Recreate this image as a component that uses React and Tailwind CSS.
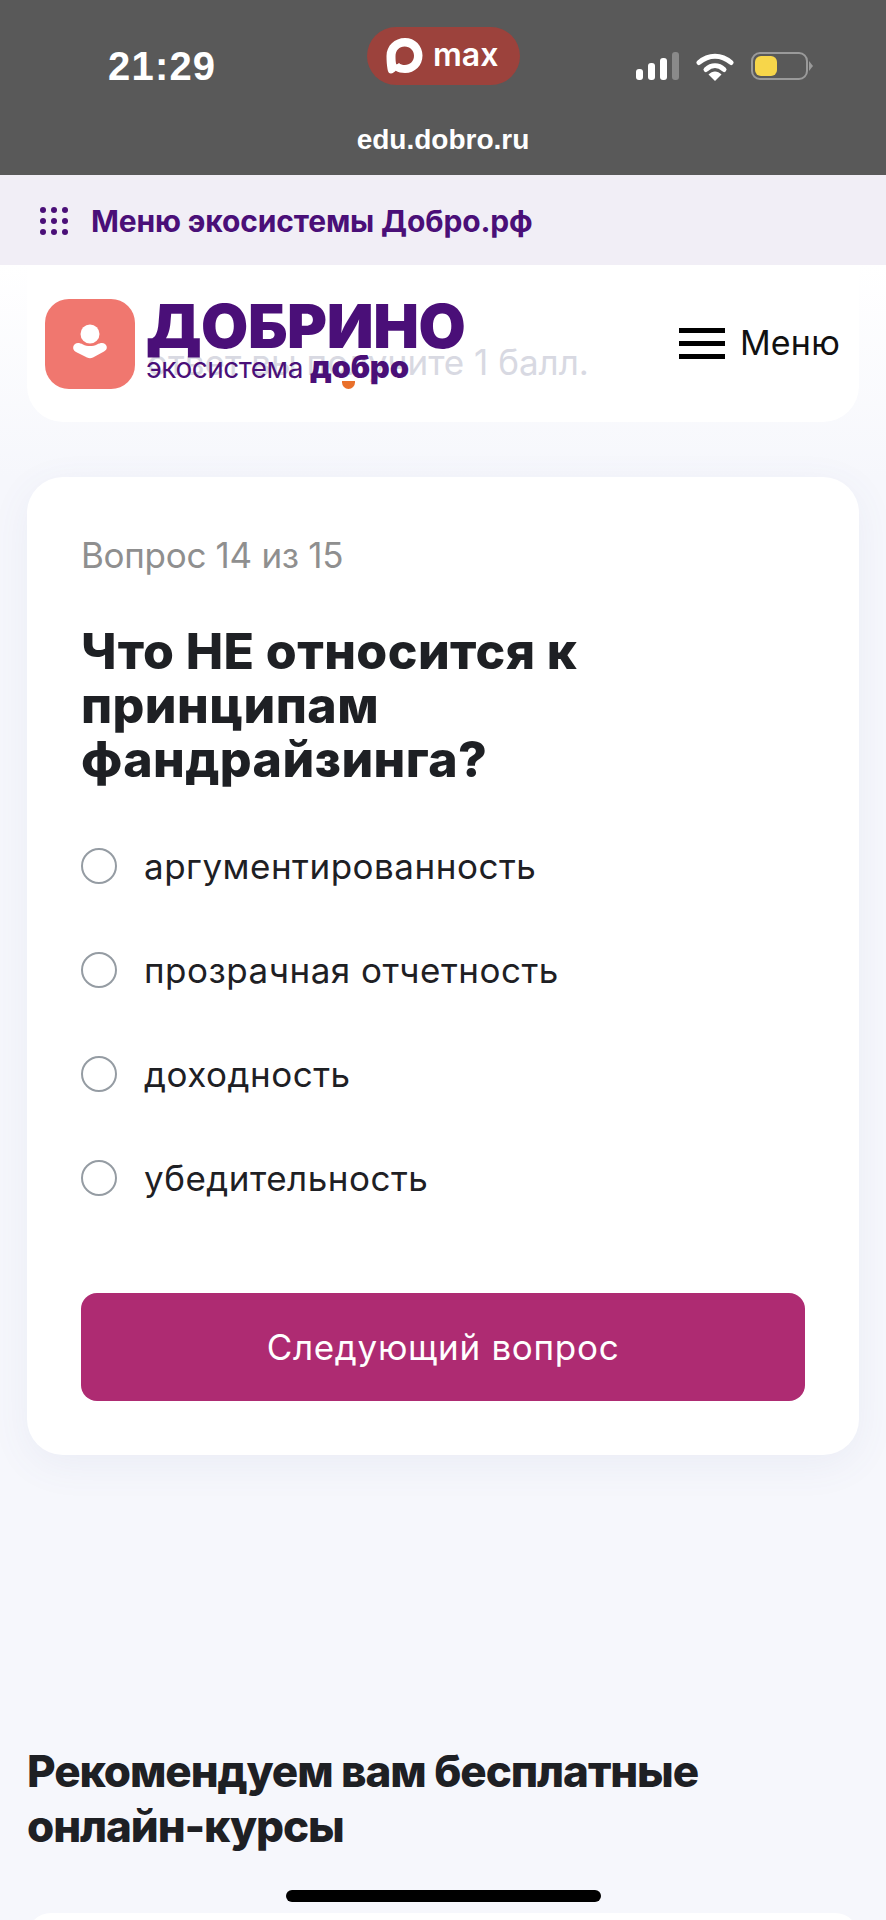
import React from 'react';

const options = ['аргументированность', 'прозрачная отчетность', 'доходность', 'убедительность'];

const StatusBar = () => (
  <div className="h-[175px] bg-[#595959] shrink-0 flex flex-col text-white font-['Liberation_Sans',sans-serif]">
    <div className="relative h-[125px]">
      <div className="absolute left-[108px] top-[43px] text-[40px] leading-[46px] font-bold tracking-[1.2px]">21:29</div>
      <div className="absolute left-[367px] top-[27px] w-[153px] h-[58px] rounded-full bg-[#9c423c] flex items-center pl-[18px] gap-[10px]">
        <svg width="38" height="38" viewBox="0 0 38 38" fill="none">
          <path fillRule="evenodd" clipRule="evenodd" fill="#fff" d="M20 1C9.5 1 1.5 8.8 1.5 19c0 5 .4 9 1 13 .4 3 1.6 4.6 3.4 4.6 2 0 3.4-1.6 4.8-2.8 2.6 1.4 5.6 2.2 9.3 2.2 10 0 17.5-7.6 17.5-17.5C37.500 8.800 30 1 20 1Zm-.3 8.500c5.300 0 9.300 4 9.300 9.200 0 5.300-4 9.300-9.200 9.300-2.300 0-4.300-.8-5.800-2.100-1 .9-2.200 1.600-2.800 1.400-.5-2-.7-5-.7-8 0-6 3.800-9.800 9.200-9.800Z" />
        </svg>
        <span className="text-[32px] leading-[38px] font-semibold font-['Inter',sans-serif] -mt-[3px]">max</span>
      </div>
      <div className="absolute left-[636px] top-[52px] flex items-end gap-[5px] h-[28px]">
        <span className="w-[7px] h-[11px] rounded-[3px] bg-white" />
        <span className="w-[7px] h-[17px] rounded-[3px] bg-white" />
        <span className="w-[7px] h-[22px] rounded-[3px] bg-white" />
        <span className="w-[7px] h-[28px] rounded-[3px] bg-[#8a8a8a]" />
      </div>
      <svg className="absolute left-[696px] top-[52px]" width="38" height="29" viewBox="0 0 38 29" fill="none">
        <path d="M3 10.500C12.500 2 25.500 2 35 10.500" stroke="#fff" strokeWidth="5" strokeLinecap="round" />
        <path d="M10 17.500C15.500 12.500 22.500 12.500 28 17.500" stroke="#fff" strokeWidth="5" strokeLinecap="round" />
        <path d="M12.500 22.500C16.500 18.500 21.500 18.500 25.500 22.500L19 29Z" fill="#fff" />
      </svg>
      <div className="absolute left-[751px] top-[52px] w-[57px] h-[28px] rounded-[9px] border-[2px] border-[#9a9a9a] p-[2px]">
        <div className="w-[22px] h-full rounded-[6px] bg-[#f7d64a]" />
      </div>
      <div className="absolute left-[809px] top-[61px] w-0 h-0 border-y-[5px] border-y-transparent border-l-[4px] border-l-[#9a9a9a]" />
    </div>
    <div className="text-center text-[28px] leading-[30px] font-bold">edu.dobro.ru</div>
  </div>
);

const EcoBar = () => (
  <div className="h-[90px] pt-[2px] bg-[#f1eef6] flex items-center pl-[40px] gap-[23px] shrink-0">
    <div className="grid grid-cols-3 gap-x-[5px] gap-y-[5px]">
      {[...Array(9).keys()].map((i) => (
        <span key={i} className="w-[6px] h-[6px] rounded-full bg-[#4a0f78]" />
      ))}
    </div>
    <span className="text-[30px] leading-[36px] font-bold text-[#4a0f78] font-['Inter',sans-serif] tracking-[-0.15px]">Меню экосистемы Добро.рф</span>
  </div>
);

const Logo = () => (
  <div className="flex items-start gap-[11px]">
    <div className="w-[90px] h-[90px] rounded-[24px] bg-[#f0776f] flex items-center justify-center">
      <svg width="40" height="40" viewBox="0 0 40 40" fill="#fff">
        <circle cx="20" cy="10" r="9.500" />
        <path d="M5 20c2-1.500 5-1 8 .500 4 2 10 2 14 0 3-1.500 6-2 8-.5 3 2.500 2 6-1 7.500l-11 6c-2 1-4 1-6 0L6 28C3 26.500 2 22.500 5 20Z" />
      </svg>
    </div>
    <div className="font-['Inter',sans-serif] text-[#4a0f78] -mt-[1px]">
      <div className="text-[61px] leading-[56px] font-black tracking-[-0.4px]">ДОБРИНО</div>
      <div className="flex items-baseline text-[28px] leading-[30px] tracking-[-0.5px] gap-[7px] -mt-[2px]">
        <span>экосистема</span>
        <span className="relative text-[31px] font-black tracking-[-0.2px]">
          добро
          <span className="absolute left-[32px] top-[29px] w-[13px] h-[8px] rounded-b-full bg-[#e9702b]" />
        </span>
      </div>
    </div>
  </div>
);

const Header = () => (
  <div className="pb-[55px] bg-gradient-to-b from-white to-[#f6f7fc] shrink-0">
    <div className="relative mx-[27px] h-[157px] bg-white rounded-b-[36px]">
      <div className="absolute left-[120px] top-[77px] text-[35px] leading-[40px] text-[#d8d9e2] font-['Inter',sans-serif] whitespace-nowrap">ответ вы получите 1 балл.</div>
      <div className="relative flex items-center justify-between pl-[18px] pr-[19px] pt-[34px]">
        <Logo />
        <div className="flex items-center gap-[15px] -mt-[2px]">
          <div className="flex flex-col gap-[8px]">
            <span className="w-[46px] h-[5px] bg-black" />
            <span className="w-[46px] h-[5px] bg-black" />
            <span className="w-[46px] h-[5px] bg-black" />
          </div>
          <span className="text-[34px] leading-[40px] text-[#111] font-['Inter',sans-serif] tracking-[0.2px]">Меню</span>
        </div>
      </div>
    </div>
  </div>
);

const Question = () => (
  <div className="mx-[27px] px-[54px] pt-[58px] pb-[54px] bg-white rounded-[36px] shrink-0 shadow-[0_10px_40px_rgba(90,100,160,0.07)] font-['Inter',sans-serif]">
    <div className="text-[35px] leading-[40px] text-[#8f8f8f] tracking-[-0.3px]">Вопрос 14 из 15</div>
    <h1 className="mt-[49px] text-[50px] leading-[54px] font-extrabold text-[#1e2024] tracking-[0.4px]">
      Что НЕ относится к<br />принципам<br />фандрайзинга?
    </h1>
    <div className="mt-[60px] flex flex-col gap-[64px]">
      {options.map((o) => (
        <div key={o} className="flex items-center gap-[27px] h-[40px]">
          <span className="w-[36px] h-[36px] rounded-full border-[2px] border-[#959ca3] shrink-0" />
          <span className="text-[35px] leading-[40px] text-[#1e2024] tracking-[0.5px]">{o}</span>
        </div>
      ))}
    </div>
    <button className="mt-[95px] w-full h-[108px] rounded-[16px] bg-[#ae2b72] text-white text-[35px] tracking-[0.7px]">Следующий вопрос</button>
  </div>
);

const App = () => (
  <div className="relative w-[886px] h-[1920px] overflow-hidden bg-[#f6f7fc] flex flex-col">
    <StatusBar />
    <EcoBar />
    <Header />
    <Question />
    <h2 className="mt-[289px] ml-[27px] w-[760px] text-[44px] leading-[55px] font-extrabold text-[#1e2024] font-['Inter',sans-serif] tracking-[-1.1px]">
      Рекомендуем вам бесплатные онлайн-курсы
    </h2>
    <div className="mx-[27px] mt-[59px] h-[40px] bg-white rounded-t-[24px] shrink-0" />
    <div className="absolute left-[286px] top-[1890px] w-[315px] h-[12px] rounded-full bg-black" />
  </div>
);

export default App;
